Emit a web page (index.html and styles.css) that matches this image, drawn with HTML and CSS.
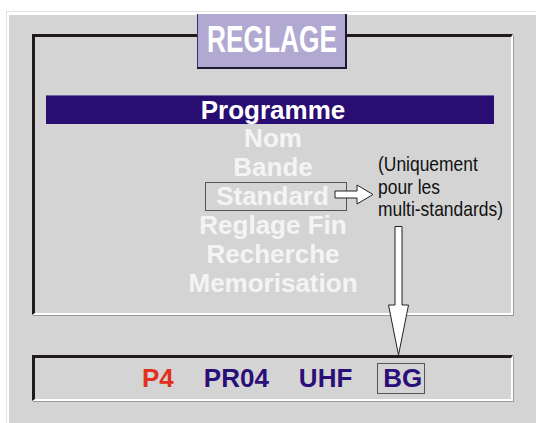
FILE: index.html
```html
<!DOCTYPE html>
<html lang="fr">
<head>
    <meta charset="UTF-8">
    <meta name="viewport" content="width=device-width, initial-scale=1.0">
    <title>Reglage</title>
    <link rel="stylesheet" href="styles.css">
</head>
<body>
    <div class="screen">
        <div class="panel">
            <div class="frame">
                <div class="title"><span>REGLAGE</span></div>
                <div class="current">Programme</div>
                <ul class="menu">
                    <li>Nom</li>
                    <li>Bande</li>
                    <li><span class="selected">Standard</span></li>
                    <li>Reglage Fin</li>
                    <li>Recherche</li>
                    <li>Memorisation</li>
                </ul>

                <!-- annotation -->
                <p class="note">(Uniquement<br>pour les<br>multi-standards)</p>
                <svg class="arrow-right" width="41" height="22" viewBox="0 0 41 22">
                    <polygon points="1,7 23,7 23,1 39,10.5 23,20 23,14 1,14" fill="#fff" stroke="#222" stroke-width="1"/>
                </svg>
                <svg class="arrow-down" width="23" height="132" viewBox="0 0 23 132">
                    <polygon points="8,1.5 15,1.5 15,80 21.5,80 11.5,130 1.5,80 8,80" fill="#fff" stroke="#222" stroke-width="1"/>
                </svg>
            </div>

            <div class="status">
                <span class="prog">P4</span>
                <span>PR04</span>
                <span>UHF</span>
                <span class="std">BG</span>
            </div>
        </div>
    </div>
</body>
</html>
```

FILE: styles.css
```css
body {
    margin: 0;
    background: #fff;
    font-family: "Liberation Sans", Arial, sans-serif;
    overflow: hidden;
}

.screen {
    margin: 11px 0 0 6px;
    padding: 3px 0 0 2px;
    border-top: 1px solid #e2e2e2;
    border-left: 1px solid #e2e2e2;
}

.panel {
    background: #d4d4d4;
    height: 408px;
    padding: 19px 0 0 23px;
    box-sizing: border-box;
}

.frame {
    position: relative;
    width: 481px;
    box-sizing: border-box;
    border-top: 3px solid #201a1a;
    border-left: 3px solid #201a1a;
    border-right: 2px solid #fff;
    border-bottom: 2px solid #fff;
    box-shadow: 1px 1px 0 #9a9a9a;
    padding: 58px 17px 15px 11px;
}

.title {
    position: absolute;
    top: -23px;
    left: 162px;
    width: 150px;
    height: 55px;
    box-sizing: border-box;
    display: flex;
    justify-content: center;
    background: #b1a9d1;
    border-left: 1px solid #3a2e6e;
    border-right: 2px solid #1c1830;
    border-bottom: 2px solid #1c1830;
    line-height: 52px;
    color: #fff;
}

.title span {
    flex: none;
    font-weight: bold;
    font-size: 36px;
    transform: scaleX(0.73);
}

.current {
    background: #2a0d72;
    border-top: 1px solid #6e62a4;
    height: 29px;
    box-sizing: border-box;
    color: #fff;
    font-weight: bold;
    font-size: 26px;
    line-height: 28px;
    text-align: center;
    padding-left: 6px;
}

.menu {
    list-style: none;
    margin: 0 -17px 0 -11px;
    padding: 0;
    text-align: center;
}

.menu li {
    color: #f4f4f4;
    font-weight: bold;
    font-size: 26px;
    line-height: 29px;
}

.selected {
    display: inline-block;
    line-height: 27px;
    padding: 0 17px 0 10px;
    margin-left: 6px;
    border: 1px solid #555;
}

.note {
    position: absolute;
    left: 343px;
    top: 116px;
    margin: 0;
    white-space: nowrap;
    font-size: 21px;
    line-height: 22.5px;
    color: #111;
    transform: scaleX(0.83);
    transform-origin: left top;
}

.arrow-right {
    position: absolute;
    left: 299px;
    top: 147px;
}

.arrow-down {
    position: absolute;
    left: 352px;
    top: 188px;
    z-index: 2;
}

.status {
    display: flex;
    gap: 30px;
    width: 481px;
    box-sizing: border-box;
    margin-top: 40px;
    border-top: 3px solid #201a1a;
    border-left: 3px solid #201a1a;
    border-right: 2px solid #fff;
    border-bottom: 2px solid #fff;
    box-shadow: 1px 1px 0 #9a9a9a;
    padding: 3px 0 3px 107px;
    font-weight: bold;
    font-size: 26px;
    line-height: 35px;
    color: #2b0f78;
}

.status .prog {
    color: #e2301f;
}

.status .std {
    align-self: center;
    line-height: 29px;
    padding: 0 2px 0 5px;
    margin-left: -5px;
    border: 1px solid #555;
}
```
